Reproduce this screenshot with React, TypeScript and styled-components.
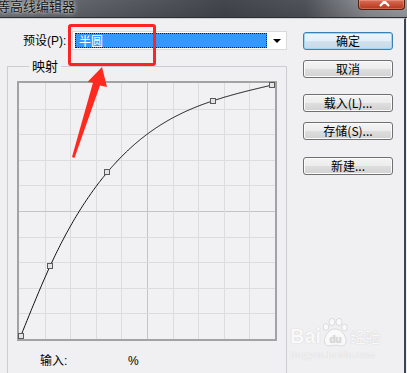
import React from "react";
import styled, { createGlobalStyle } from "styled-components";

const GlobalStyle = createGlobalStyle`
  html, body {
    margin: 0;
    padding: 0;
    background: #f0eff1;
    overflow: hidden;
  }
`;

const uiFont = `"Liberation Sans", "Noto Sans CJK SC", sans-serif`;

const Window = styled.div`
  position: relative;
  width: 407px;
  height: 373px;
  overflow: hidden;
  display: flex;
  flex-direction: column;
  background: #f0eff1;
  font-family: ${uiFont};
  font-size: 12px;
  color: #000;
`;

const TitleBar = styled.div`
  height: 17px;
  flex-shrink: 0;
  display: flex;
  background: linear-gradient(180deg, rgba(0, 0, 0, 0) 0%, rgba(0, 0, 0, 0.12) 100%),
    linear-gradient(90deg, #74787e 0%, #5d6167 25%, #44484e 55%, #50545a 75%, #8e9196 90%, #9da0a5 100%);
  border-bottom: 1px solid #2c2f34;
`;

const Title = styled.div`
  margin: -3px 0 0 -3px;
  font-family: "Noto Sans CJK SC", sans-serif;
  font-size: 13px;
  line-height: 17px;
  color: #141414;
  text-shadow: 0 0 5px rgba(255, 255, 255, 0.85), 0 0 2px rgba(255, 255, 255, 0.6);
`;

const CloseButton = styled.div`
  margin: 0 2px 0 auto;
  width: 47px;
  height: 10px;
  box-sizing: border-box;
  border: 1px solid #54200f;
  border-top: none;
  border-radius: 0 0 4px 4px;
  background: linear-gradient(180deg, #d9705a 0%, #c54a30 60%, #b2381f 100%);
  box-shadow: inset 0 0 0 1px rgba(255, 190, 170, 0.35);
  overflow: hidden;
`;

const Body = styled.div`
  flex: 1;
  display: flex;
  min-height: 0;
  border-top: 1px solid #cfcfd3;
  border-right: 2px solid #3b4652;
  margin-right: 1px;
`;

const LeftPane = styled.div`
  width: 290px;
  flex-shrink: 0;
  display: flex;
  flex-direction: column;
`;

const PresetRow = styled.div`
  display: flex;
  align-items: center;
  margin-top: 12px;
  padding-left: 23px;
`;

const Label = styled.span`
  width: 49px;
  flex-shrink: 0;
  line-height: 14px;
`;

const Select = styled.div`
  width: 215px;
  height: 19px;
  box-sizing: border-box;
  display: flex;
  align-items: center;
  padding: 1px 0 1px 2px;
  border: 1px solid #d9d9dc;
  background: #fff;
`;

const SelectValue = styled.div`
  width: 192px;
  height: 15px;
  box-sizing: border-box;
  padding-left: 3px;
  border: 1px dotted #1c1c1c;
  background: #3399ff;
  color: #fff;
  font-family: "Noto Sans CJK SC", sans-serif;
  font-size: 12px;
  line-height: 13px;
`;

const SelectArrow = styled.div`
  flex: 1;
  display: flex;
  justify-content: center;
  &::after {
    content: "";
    border-left: 4px solid transparent;
    border-right: 4px solid transparent;
    border-top: 4px solid #000;
  }
`;

const GroupBox = styled.fieldset`
  flex: 1;
  margin: 9px 0 0 7px;
  width: 280px;
  box-sizing: border-box;
  padding: 8px 0 0 9px;
  border: 1px solid #cdcdd1;
  border-bottom: none;
  min-width: 0;
`;

const Legend = styled.legend`
  margin-left: 12px;
  padding: 0 3px;
  font-family: "Noto Sans CJK SC", sans-serif;
  font-size: 13px;
  line-height: 14px;
`;

const InfoRow = styled.div`
  display: flex;
  margin-top: 13px;
  padding-left: 23px;
  line-height: 14px;
`;

const InfoLabel = styled.span`
  width: 88px;
`;

const RightPane = styled.div`
  display: flex;
  flex-direction: column;
  padding: 13px 0 0 13px;
`;

const Button = styled.div<{ $gap?: number; $default?: boolean }>`
  width: 90px;
  height: 18px;
  box-sizing: border-box;
  margin-top: ${({ $gap }) => $gap ?? 0}px;
  display: flex;
  align-items: center;
  justify-content: center;
  border: 1px solid ${({ $default }) => ($default ? "#3c7fb1" : "#707070")};
  border-radius: 3px;
  background: ${({ $default }) =>
    $default
      ? "linear-gradient(180deg, #eef5fa 0%, #e3eef6 50%, #d2e2ee 51%, #c6d9e8 100%)"
      : "linear-gradient(180deg, #f4f4f4 0%, #ececec 50%, #dedede 51%, #d2d2d2 100%)"};
  box-shadow: inset 0 0 0 1px ${({ $default }) => ($default ? "#9fd4f2" : "#fbfbfb")};
  font-family: "Noto Sans CJK SC", sans-serif;
  font-size: 12px;
  line-height: 14px;
`;

const Highlight = styled.div`
  position: absolute;
  left: 68px;
  top: 24px;
  width: 88px;
  height: 42px;
  box-sizing: border-box;
  border: 3px solid #ff2424;
  border-radius: 3px;
  pointer-events: none;
`;

const ArrowLayer = styled.svg`
  position: absolute;
  left: 0;
  top: 0;
  pointer-events: none;
`;

const Watermark = styled.div`
  position: absolute;
  left: 290px;
  top: 318px;
  display: flex;
  flex-direction: column;
  color: #f9f9fa;
  text-shadow: 0 0 1px rgba(110, 110, 110, 0.35);
  pointer-events: none;
`;

const WatermarkLogo = styled.div`
  display: flex;
  align-items: flex-end;
`;

const WatermarkBai = styled.span`
  font-family: "Liberation Sans", sans-serif;
  font-weight: bold;
  font-size: 20px;
  line-height: 22px;
`;

const WatermarkJy = styled.span`
  font-family: "Noto Sans CJK SC", sans-serif;
  font-size: 15px;
  line-height: 20px;
  margin-left: 1px;
`;

const WatermarkUrl = styled.span`
  margin-top: 2px;
  font-family: "Liberation Serif", serif;
  font-size: 11px;
  line-height: 11px;
  letter-spacing: 0.2px;
`;

// curve points in graph coordinates (graph is 260px incl. border)
const points: [number, number][] = [
  [4, 254.5],
  [33, 185.3],
  [90.3, 91.3],
  [196.3, 19.7],
  [255.3, 4],
];

// natural cubic spline y(x), like the curves dialog draws it
const curvePath = () => {
  const n = points.length;
  const xs = points.map((p) => p[0]);
  const ys = points.map((p) => p[1]);
  const h = xs.slice(1).map((x, i) => x - xs[i]);
  const m = new Array(n).fill(0);
  const a: number[] = [];
  const b: number[] = [];
  const c: number[] = [];
  const r: number[] = [];
  for (let i = 1; i < n - 1; i++) {
    a.push(h[i - 1]);
    b.push(2 * (h[i - 1] + h[i]));
    c.push(h[i]);
    r.push(6 * ((ys[i + 1] - ys[i]) / h[i] - (ys[i] - ys[i - 1]) / h[i - 1]));
  }
  const k = b.length;
  for (let i = 1; i < k; i++) {
    const w = a[i] / b[i - 1];
    b[i] -= w * c[i - 1];
    r[i] -= w * r[i - 1];
  }
  for (let i = k - 1; i >= 0; i--) {
    m[i + 1] = (r[i] - (i < k - 1 ? c[i] * m[i + 2] : 0)) / b[i];
  }
  const pts: string[] = [];
  for (let i = 0; i < n - 1; i++) {
    for (let x = xs[i]; x < xs[i + 1]; x += 1) {
      const t1 = xs[i + 1] - x;
      const t0 = x - xs[i];
      const y =
        (m[i] * t1 ** 3 + m[i + 1] * t0 ** 3) / (6 * h[i]) +
        (ys[i] / h[i] - (m[i] * h[i]) / 6) * t1 +
        (ys[i + 1] / h[i] - (m[i + 1] * h[i]) / 6) * t0;
      pts.push(`${x.toFixed(1)},${Math.max(3, y).toFixed(1)}`);
    }
  }
  pts.push(`${xs[n - 1]},${ys[n - 1]}`);
  return `M${pts.join(" L")}`;
};

const CurveGraph = () => {
  const lines = Array.from({ length: 9 }, (_, i) => 2 + 25.6 * (i + 1));
  return (
    <svg width={260} height={260} style={{ display: "block" }}>
      <rect x={0} y={0} width={260} height={260} fill="#f1f0f2" />
      {lines.map((v, i) => (
        <g key={i} stroke={i === 4 ? "#c4c4c6" : "#dcdcde"} strokeWidth={1}>
          <line x1={Math.round(v) + 0.5} y1={2} x2={Math.round(v) + 0.5} y2={258} />
          <line x1={2} y1={Math.round(v) + 0.5} x2={258} y2={Math.round(v) + 0.5} />
        </g>
      ))}
      <rect x={1} y={1} width={258} height={258} fill="none" stroke="#a3a3a5" strokeWidth={2} />
      <path d={curvePath()} fill="none" stroke="#111" strokeWidth={1} />
      {points.map(([x, y], i) => (
        <rect
          key={i}
          x={Math.round(x) - 2.5}
          y={Math.round(y) - 2.5}
          width={5}
          height={5}
          fill="#e4e4e4"
          stroke="#5a5a5a"
          strokeWidth={1}
        />
      ))}
    </svg>
  );
};

const PawIcon = () => (
  <svg width={26} height={30} viewBox="0 0 26 30" style={{ margin: "0 1px -1px 1px" }}>
    <g fill="#f9f9fa" stroke="rgba(120,120,120,0.35)" strokeWidth={0.6}>
      <ellipse cx={4} cy={9} rx={2.8} ry={3.4} />
      <ellipse cx={10} cy={4} rx={3} ry={3.6} />
      <ellipse cx={17} cy={4} rx={3} ry={3.6} />
      <ellipse cx={22.5} cy={9.5} rx={2.8} ry={3.4} />
      <path d="M13 11 C7 11 3 17 2.5 22 C2 27 6 28.5 9 27.5 C11 27 15 27 17 27.5 C21 28.5 24.5 27 24 22 C23.5 17 19 11 13 11 Z" />
    </g>
    <text
      x={13.5}
      y={25}
      textAnchor="middle"
      fontFamily="Liberation Sans, sans-serif"
      fontWeight="bold"
      fontSize={10}
      fill="#dadadc"
    >
      du
    </text>
  </svg>
);

export default function App() {
  return (
    <>
      <GlobalStyle />
      <Window>
        <TitleBar>
          <Title>等高线编辑器</Title>
          <CloseButton>
            <svg width={45} height={10}>
              <path d="M21 -4 L25.5 0.5 L30 -4 M21 5 L25.5 0.5 L30 5" stroke="#fff" strokeWidth={2.2} fill="none" />
            </svg>
          </CloseButton>
        </TitleBar>
        <Body>
          <LeftPane>
            <PresetRow>
              <Label>预设(P):</Label>
              <Select>
                <SelectValue>半圆</SelectValue>
                <SelectArrow />
              </Select>
            </PresetRow>
            <GroupBox>
              <Legend>映射</Legend>
              <CurveGraph />
              <InfoRow>
                <InfoLabel>输入:</InfoLabel>
                <span>%</span>
              </InfoRow>
            </GroupBox>
          </LeftPane>
          <RightPane>
            <Button $default>确定</Button>
            <Button $gap={10}>取消</Button>
            <Button $gap={16}>载入(L)...</Button>
            <Button $gap={10}>存储(S)...</Button>
            <Button $gap={17}>新建...</Button>
          </RightPane>
        </Body>
        <Highlight />
        <ArrowLayer width={407} height={373}>
          <polygon
            points="102,67 107,87 100,85.5 74.5,158 72,157 93,82.5 87.5,82"
            fill="#ff2a1f"
          />
        </ArrowLayer>
        <Watermark>
          <WatermarkLogo>
            <WatermarkBai>Bai</WatermarkBai>
            <PawIcon />
            <WatermarkJy>经验</WatermarkJy>
          </WatermarkLogo>
          <WatermarkUrl>jingyan.baidu.com</WatermarkUrl>
        </Watermark>
      </Window>
    </>
  );
}
